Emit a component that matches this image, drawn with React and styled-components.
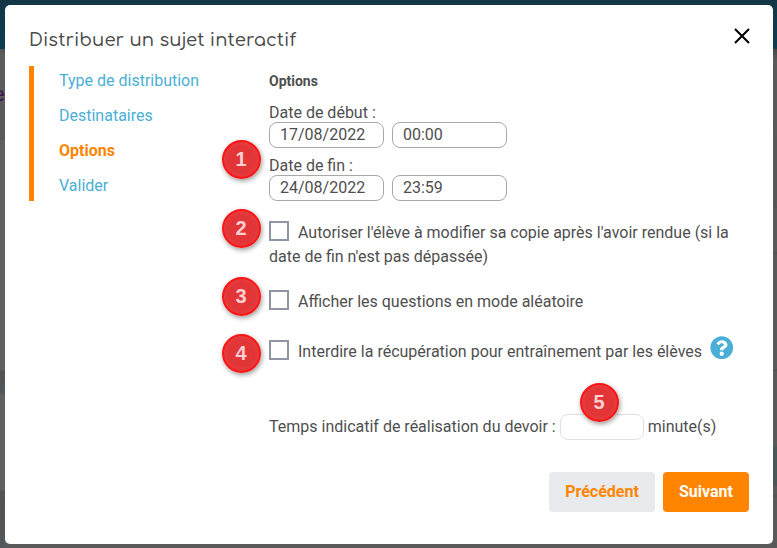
import React from "react";
import styled, { createGlobalStyle, css } from "styled-components";
import { FaQuestionCircle } from "react-icons/fa";

const GlobalStyle = createGlobalStyle`
  * { box-sizing: border-box; }
  body { margin: 0; font-family: Roboto, "Open Sans", sans-serif; font-size: 16px; color: #4f4f4f; }
`;

const Page = styled.div`
  position: relative;
  width: 777px;
  height: 548px;
  padding: 5px 4px 4px 5px;
  overflow: hidden;
  background: linear-gradient(#123646 0, #0c3d50 49px, #4b4b4b 49px, #5a5a5a 54px, #5a5a5a 100%);
`;

const Backdrop = styled.div`
  position: absolute;
  inset: 49px 0 0;
  display: flex;
  justify-content: space-between;
`;

const BackdropLeft = styled.div`
  width: 5px;
  background: linear-gradient(#515151 0, #5c5c5c 5px, #595959 89px, #4e5558 90px, #606060 91px,
    #606060 321px, #505254 322px, #55585a 345px, #606060 346px, #606060 441px, #505254 442px, #55585a 100%);
`;

const BackdropRight = styled.div`
  width: 4px;
  background: linear-gradient(#484848 0, #5a5a5a 12px, #575757 157px, #4d4d4d 158px, #595959 159px,
    #595959 203px, #4d4d4d 204px, #595959 205px, #595959 320px, #4d4d4d 321px, #595959 322px,
    #595959 397px, #4b5658 398px, #4b5658 436px, #595959 438px, #595959 446px, #4d4d4d 447px, #595959 448px);
`;

const BackdropLetter = styled.span`
  position: absolute;
  left: -6px;
  top: 33px;
  font-size: 20px;
  line-height: 24px;
  color: #3a1650;
`;

const Dialog = styled.section`
  position: relative;
  height: 539px;
  padding: 0 24px;
  border-radius: 5px;
  background: #fff;
`;

const Header = styled.header`
  display: flex;
  justify-content: space-between;
  height: 61px;
`;

const Title = styled.h1`
  margin: 22px 0 0;
  font: 500 18px/26px Comfortaa, Quicksand, Lato, sans-serif;
  letter-spacing: 0.08px;
  color: #4a4a4a;
`;

const CloseButton = styled.button`
  width: 16px;
  height: 16px;
  margin: 23px -1px 0 0;
  padding: 0;
  border: 0;
  background: none;
  svg { display: block; }
`;

const Body = styled.div`
  display: grid;
  grid-template-columns: 240px 1fr;
  height: 406px;
`;

const Steps = styled.nav`
  display: flex;
  flex-direction: column;
  gap: 11px;
  height: 135px;
  padding: 3px 0 0 25px;
  border-left: 5px solid #ff8500;
`;

const Step = styled.a`
  line-height: 24px;
  color: ${(p) => (p.$active ? "#ff8500" : "#4bafd5")};
  font-weight: ${(p) => (p.$active ? 700 : 400)};
`;

const Form = styled.div`
  padding-top: 5px;
`;

const Heading = styled.h2`
  margin: 0 0 11px;
  font-size: 14px;
  line-height: 20px;
  font-weight: 700;
`;

const DateGroup = styled.div`
  height: 53px;
`;

const Label = styled.div`
  height: 20px;
  line-height: 22px;
`;

const Inputs = styled.div`
  display: flex;
  gap: 8px;
`;

const field = css`
  display: block;
  height: 26px;
  padding: 0 10px;
  border-radius: 8px;
  background: #fff;
  font: 400 16px Roboto, sans-serif;
  color: #4f4f4f;
  outline: none;
`;

const DateInput = styled.input`
  ${field}
  width: 115px;
  padding-bottom: 2px;
  border: 1px solid #a8a8a8;
`;

const MinuteInput = styled.input`
  ${field}
  width: 84px;
  border: 1px solid #e0e0e2;
`;

const Options = styled.div`
  display: flex;
  flex-direction: column;
  padding-top: 13px;
`;

const Option = styled.label`
  display: block;
  height: ${(p) => p.$height}px;
  line-height: 24px;
`;

const Checkbox = styled.input`
  appearance: none;
  width: 20px;
  height: 20px;
  margin: 0 9px 0 0;
  border: 2px solid #9095a5;
  vertical-align: -3px;
  background: #fff;
`;

const Help = styled(FaQuestionCircle)`
  width: 23.5px;
  height: 23.5px;
  margin: -8px 0 0 8px;
  vertical-align: -2px;
  color: #4bafd5;
`;

const Duration = styled.div`
  display: flex;
  align-items: center;
  gap: 4px;
  height: 26px;
  line-height: 26px;
`;

const Footer = styled.footer`
  display: flex;
  justify-content: flex-end;
  gap: 8px;
`;

const Button = styled.button`
  width: ${(p) => (p.$primary ? 86 : 106)}px;
  height: 40px;
  padding: 0 0 1px;
  border: 0;
  border-radius: 4px;
  font: 700 16px Roboto, sans-serif;
  color: ${(p) => (p.$primary ? "#fff" : "#ff8500")};
  background: ${(p) => (p.$primary ? "#ff8500" : "#e9eaee")};
`;

const Marker = styled.span`
  position: absolute;
  left: ${(p) => p.$x}px;
  top: ${(p) => p.$y}px;
  width: 39px;
  height: 39px;
  border: 2px solid #fc1515;
  border-radius: 50%;
  background: rgba(224, 42, 45, 0.95);
  box-shadow: 1px 2px 5px rgba(0, 0, 0, 0.4), inset 0 0 5px rgba(255, 110, 100, 0.35);
  font: 700 20px/34px "Liberation Sans", sans-serif;
  text-align: center;
  color: #fcd0d0;
`;

const markers = [
  [1, 216.5, 134.5],
  [2, 216.5, 203.5],
  [3, 216.5, 271.5],
  [4, 216.5, 328.5],
  [5, 574.5, 377.5],
];

function DateFields({ label, date, time }) {
  return (
    <DateGroup>
      <Label>{label}</Label>
      <Inputs>
        <DateInput defaultValue={date} />
        <DateInput defaultValue={time} />
      </Inputs>
    </DateGroup>
  );
}

export default function App() {
  return (
    <Page>
      <GlobalStyle />
      <Backdrop>
        <BackdropLeft />
        <BackdropRight />
        <BackdropLetter>e</BackdropLetter>
      </Backdrop>
      <Dialog>
        <Header>
          <Title>Distribuer un sujet interactif</Title>
          <CloseButton aria-label="Fermer">
            <svg width="16" height="16" viewBox="0 0 16 16" fill="none" stroke="#000" strokeWidth="2">
              <path d="M1 1 15 15M15 1 1 15" />
            </svg>
          </CloseButton>
        </Header>
        <Body>
          <Steps>
            <Step>Type de distribution</Step>
            <Step>Destinataires</Step>
            <Step $active>Options</Step>
            <Step>Valider</Step>
          </Steps>
          <Form>
            <Heading>Options</Heading>
            <DateFields label="Date de début :" date="17/08/2022" time="00:00" />
            <DateFields label="Date de fin :" date="24/08/2022" time="23:59" />
            <Options>
              <Option $height={69}>
                <Checkbox type="checkbox" />
                Autoriser l'élève à modifier sa copie après l'avoir rendue (si la date de fin n'est pas dépassée)
              </Option>
              <Option $height={50}>
                <Checkbox type="checkbox" />
                Afficher les questions en mode aléatoire
              </Option>
              <Option $height={74}>
                <Checkbox type="checkbox" />
                Interdire la récupération pour entraînement par les élèves
                <Help />
              </Option>
            </Options>
            <Duration>
              <span>Temps indicatif de réalisation du devoir :</span>
              <MinuteInput />
              <span>minute(s)</span>
            </Duration>
          </Form>
        </Body>
        <Footer>
          <Button>Précédent</Button>
          <Button $primary>Suivant</Button>
        </Footer>
        {markers.map(([n, x, y]) => (
          <Marker key={n} $x={x} $y={y}>{n}</Marker>
        ))}
      </Dialog>
    </Page>
  );
}
